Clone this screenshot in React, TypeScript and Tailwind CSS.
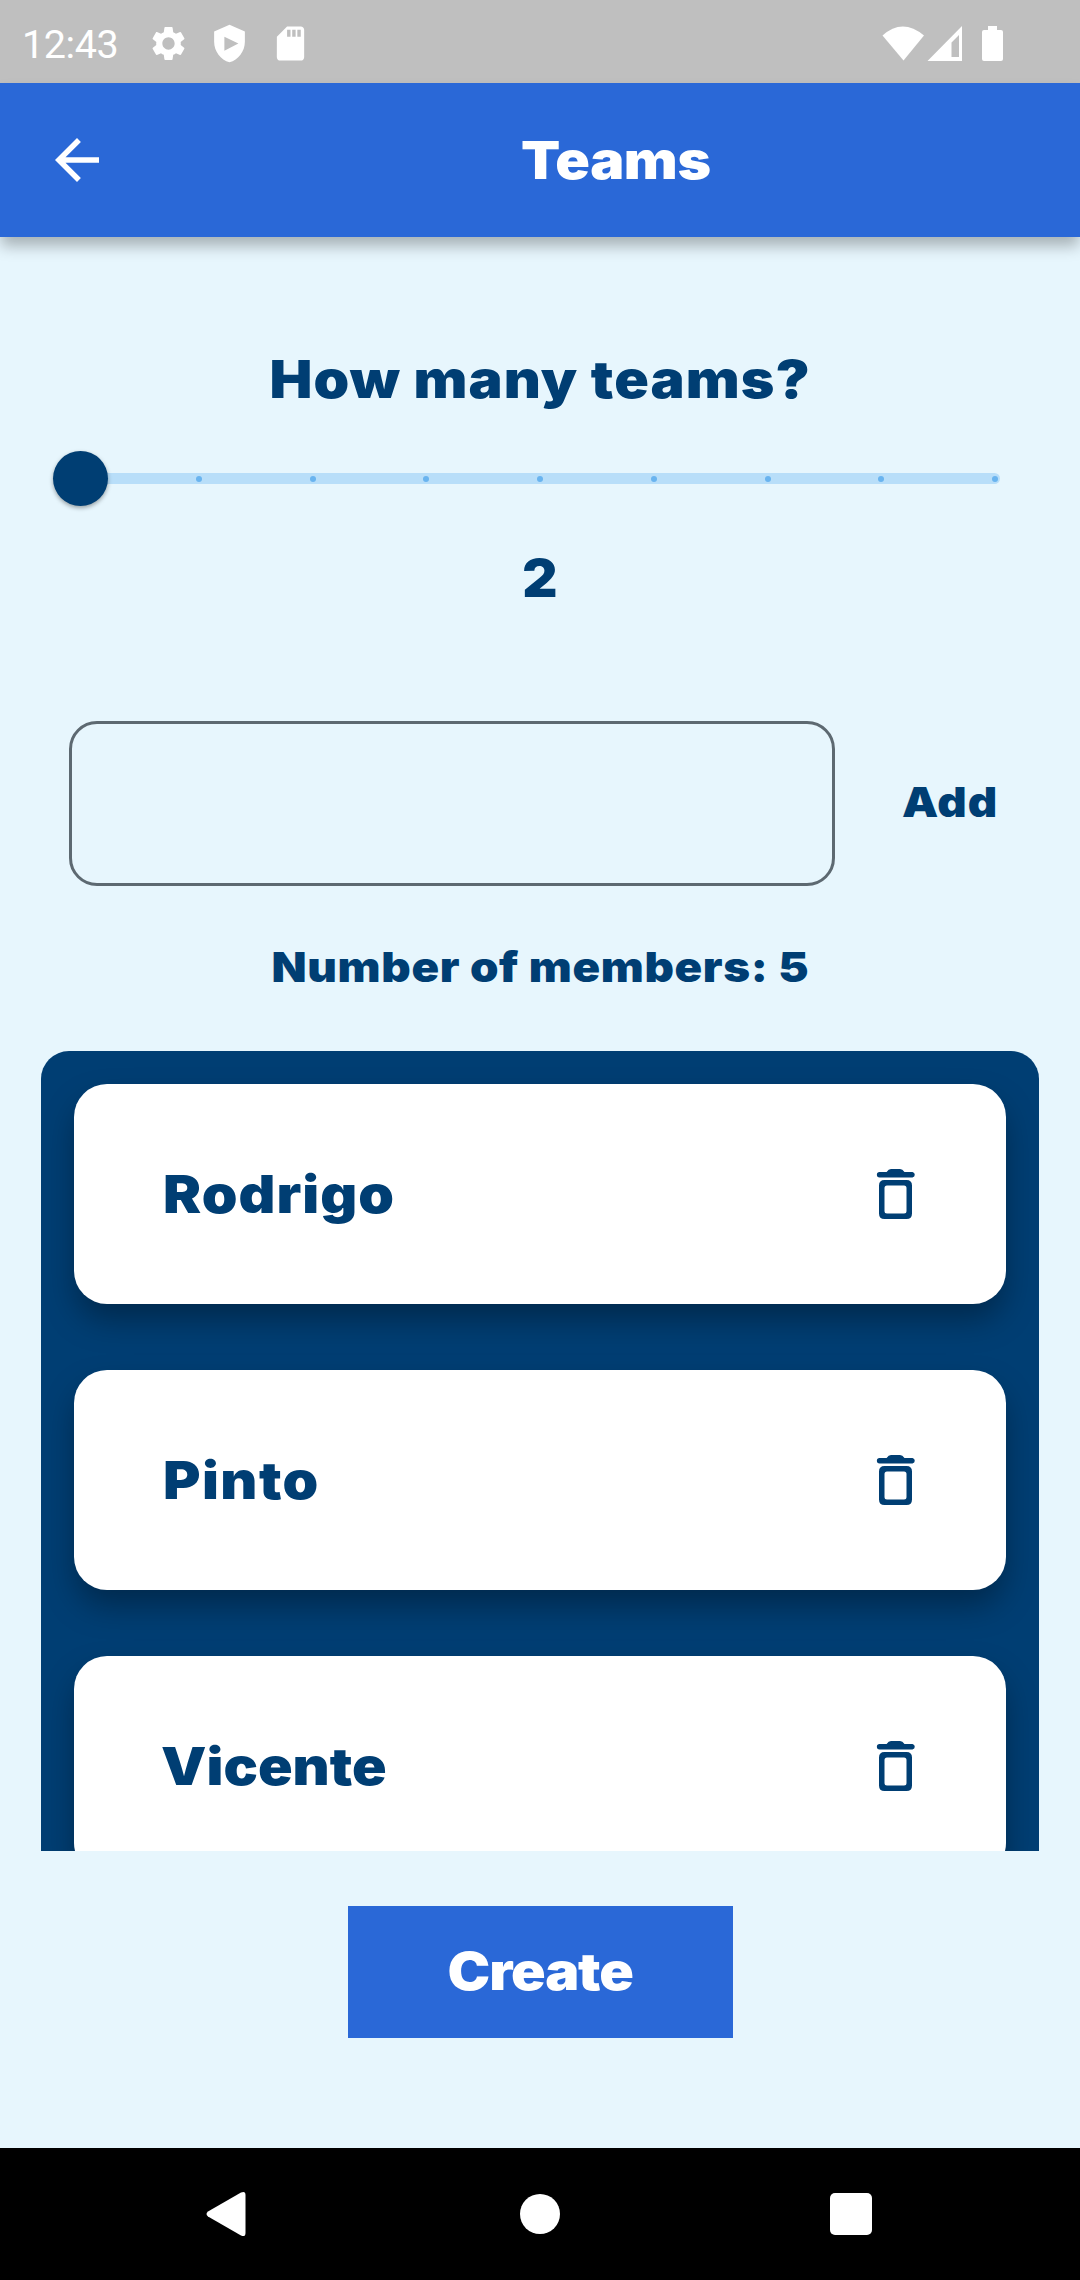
import { MdArrowBack, MdSettings, MdSdCard } from "react-icons/md";

const members = [
  { name: "Rodrigo", tracking: "tracking-[0.95px]" },
  { name: "Pinto", tracking: "tracking-[1.3px]" },
  { name: "Vicente", tracking: "tracking-[0px] -ml-[2px]" },
];

const stops = [0, 1, 2, 3, 4, 5, 6, 7, 8];

function ShieldIcon() {
  return (
    <svg viewBox="0 0 24 24" className="size-[41px]" fill="white">
      <path
        fillRule="evenodd"
        d="M12 1 3 5v6c0 5.55 3.84 10.74 9 12 5.16-1.26 9-6.45 9-12V5l-9-4zM9 8l8.2 4L9 16.2z"
      />
    </svg>
  );
}

function TrashIcon() {
  return (
    <svg viewBox="0 0 40 52" className="h-[52px] w-10" fill="#003e73">
      <path d="M3.6 4H10.6Q12.500 1 15 1H24Q26.500 1 28.500 4H36.500A2.8 2.8 0 0 1 36.500 9.500H3.600A2.750 2.750 0 0 1 3.600 4Z" />
      <path
        fillRule="evenodd"
        d="M8.500 12H30.500Q36 12 36 17.500V45.500Q36 51 30.500 51H8.500Q3 51 3 45.500V17.500Q3 12 8.500 12ZM11 17.500Q8.500 17.500 8.500 20V43Q8.500 45.500 11 45.500H28Q30.500 45.500 30.500 43V20Q30.500 17.500 28 17.500Z"
      />
    </svg>
  );
}

function StatusBar() {
  return (
    <div className="flex h-[83px] shrink-0 items-center bg-[#bfbfbf] pt-1 pl-[22px] text-white">
      <span className="mt-[2px] w-[126px] font-['Roboto',sans-serif] text-[39.5px] leading-none font-normal tracking-[-0.4px]">12:43</span>
      <div className="flex items-center gap-5">
        <MdSettings className="size-[41px]" />
        <ShieldIcon />
        <MdSdCard className="size-[41px]" />
      </div>
      <svg viewBox="0 0 124 40" className="ml-auto mr-[76px] h-10 w-[124px]" fill="white">
        <path d="M2.500 11.500Q22.500-6.500 44 11.500L23.500 36.500Z" />
        <path fillRule="evenodd" d="M82 2V37H47.500ZM79 11 71.500 18.500V33H79Z" />
        <path d="M108 2H117V6H121Q123 6 123 8V35Q123 37 121 37H104Q102 37 102 35V8Q102 6 104 6H108Z" />
      </svg>
    </div>
  );
}

function Header() {
  return (
    <header className="relative z-10 flex h-[154px] shrink-0 items-center bg-[#2a68d7] pl-11 text-white shadow-[0_10px_14px_-1px_rgba(0,0,0,0.28)]">
      <button className="flex">
        <MdArrowBack className="size-[66px]" />
      </button>
      <h1 className="mt-[2px] ml-[411px] origin-left scale-x-110 text-[52px] tracking-[-0.4px]">Teams</h1>
    </header>
  );
}

function TeamSlider() {
  return (
    <div className="relative mx-[80px] mt-[67px] flex h-[11px] items-center justify-between rounded-full bg-[#b8def9] pr-[2px] pl-[2px]">
      {stops.map((stop) => (
        <span key={stop} className="size-[6px] rounded-full bg-[#6ab4ef]" />
      ))}
      <span className="absolute top-[-22px] left-[-27.5px] size-[55px] rounded-full bg-[#003e73] shadow-[0_2px_4px_rgba(0,0,0,0.35)]" />
    </div>
  );
}

export default function App() {
  return (
    <div className="flex h-[2280px] w-[1080px] flex-col overflow-hidden bg-[#e7f6fd] font-['Inter',sans-serif] leading-none font-black text-[#003e73]">
      <StatusBar />
      <Header />
      <main className="flex min-h-0 flex-1 flex-col">
        <h2 className="mt-[117px] text-center text-[52px]">
          <span className="inline-block scale-x-110 tracking-[1px]">How many teams?</span>
        </h2>
        <TeamSlider />
        <p className="mt-[69px] text-center text-[52px]">
          <span className="inline-block scale-x-105">2</span>
        </p>
        <div className="mt-[116px] flex items-center pl-[69px]">
          <input className="h-[165px] w-[766px] rounded-[28px] border-3 border-[#5d6971] bg-transparent px-8 outline-none" />
          <button className="-mt-[2px] ml-[67px] origin-left scale-x-110 text-[41.5px] tracking-[0.9px]">Add</button>
        </div>
        <p className="mt-[61px] text-center text-[41.5px]">
          <span className="inline-block scale-x-110 tracking-[0.58px]">Number of members: 5</span>
        </p>
        <ul className="mx-[41px] mt-[62px] flex h-[800px] shrink-0 flex-col gap-[66px] overflow-hidden rounded-t-[28px] bg-[#003e73] px-[33px] pt-[33px]">
          {members.map((member) => (
            <li
              key={member.name}
              className="flex h-[220px] shrink-0 items-center justify-between rounded-[33px] bg-white pr-[90px] pl-[89px] shadow-[0_17px_32px_-2px_rgba(0,0,0,0.34)]"
            >
              <span className={`mt-[2px] origin-left scale-x-110 text-[52px] ${member.tracking}`}>{member.name}</span>
              <button className="flex">
                <TrashIcon />
              </button>
            </li>
          ))}
        </ul>
        <button className="mt-[55px] h-33 w-[385px] shrink-0 self-center bg-[#2a68d7] text-[52px] text-white">
          <span className="inline-block scale-x-110 tracking-[-1.05px]">Create</span>
        </button>
      </main>
      <nav className="flex h-[132px] shrink-0 items-center justify-between bg-black pr-[208px] pl-[206px]">
        <svg viewBox="0 0 40 46" className="h-[46px] w-10" fill="white">
          <path d="M2 20.500 35 1.500Q39.500-.5 39.500 4V42Q39.500 46.500 35 44.500L2 25.500Q-1 23 2 20.500Z" />
        </svg>
        <span className="ml-1 size-10 rounded-full bg-white" />
        <span className="size-[42px] rounded-[5px] bg-white" />
      </nav>
    </div>
  );
}
